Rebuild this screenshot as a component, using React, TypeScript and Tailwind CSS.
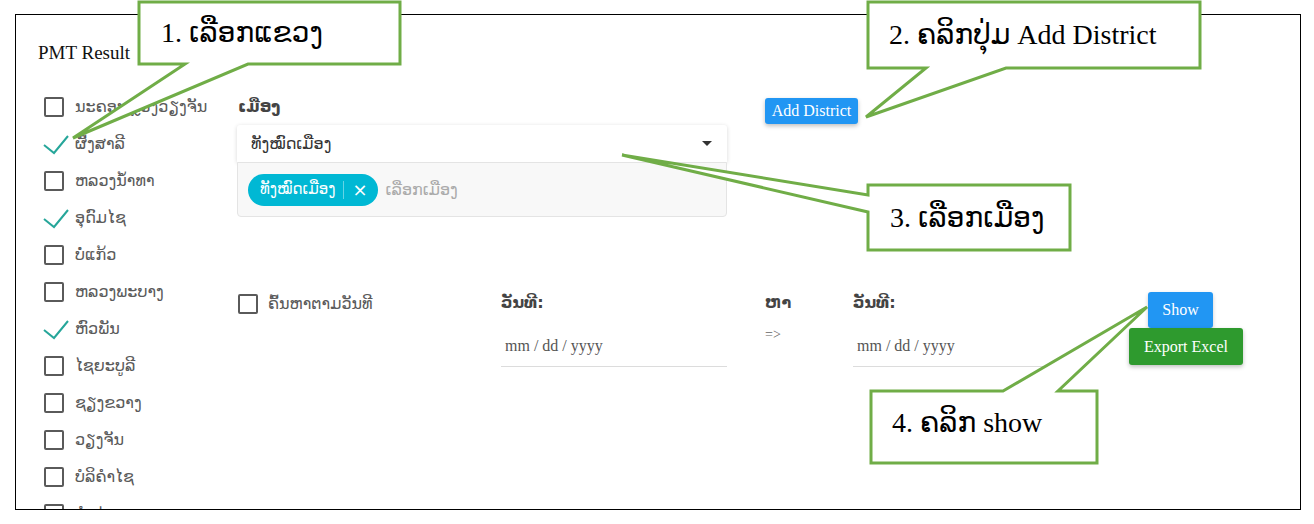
import React from "react";

const provinces = [
  { name: "ນະຄອນຫຼວງວຽງຈັນ", checked: false },
  { name: "ຜົ້ງສາລີ", checked: true },
  { name: "ຫລວງນ້ຳທາ", checked: false },
  { name: "ອຸດົມໄຊ", checked: true },
  { name: "ບໍ່ແກ້ວ", checked: false },
  { name: "ຫລວງພະບາງ", checked: false },
  { name: "ຫົວພັນ", checked: true },
  { name: "ໄຊຍະບູລີ", checked: false },
  { name: "ຊຽງຂວາງ", checked: false },
  { name: "ວຽງຈັນ", checked: false },
  { name: "ບໍລິຄຳໄຊ", checked: false },
  { name: "ຄຳມ່ວນ", checked: false },
];

const lao = { fontFamily: '"DejaVu Sans", "Noto Sans", sans-serif' };
const serif = { fontFamily: '"Liberation Serif", "DejaVu Sans", serif' };

function Box() {
  return <span className="block w-[20px] h-[20px] border-2 border-[#5a5a5a] rounded-[2px] shrink-0" />;
}

function Tick() {
  return (
    <svg width="26" height="22" viewBox="0 0 26 22" className="shrink-0 -ml-[1px] -mr-[5px]">
      <polyline points="1,11 11,19 25,2" fill="none" stroke="#26a69a" strokeWidth="2" />
    </svg>
  );
}

function DateField() {
  return (
    <div className="flex flex-col w-[226px]">
      <div className="h-[22px] text-[16px] font-bold text-[#444] leading-[22px]" style={lao}>
        ວັນທີ:
      </div>
      <div
        className="mt-[12px] h-[41px] border-b border-[#dcdcdc] flex items-center pl-[4px] text-[16px] text-[#555]"
        style={serif}
      >
        mm / dd / yyyy
      </div>
    </div>
  );
}

type Callout = { d: string; x: number; y: number; w: number; h: number; text: string; pl: number; dy: number };

const callouts: Callout[] = [
  { d: "M139,2 H400 V64 H248 L73,138 L185,64 H139 Z", x: 139, y: 2, w: 261, h: 62, text: "1. ເລືອກແຂວງ", pl: 22, dy: 0 },
  { d: "M868,2 H1200 V68 H1006 L866,117 L926,68 H868 Z", x: 868, y: 2, w: 332, h: 66, text: "2. ຄລິກປຸ່ມ Add District", pl: 21, dy: 0 },
  { d: "M868,185 H1070 V250 H868 V212 L622,155 L868,195 Z", x: 868, y: 185, w: 202, h: 65, text: "3. ເລືອກເມືອງ", pl: 22, dy: 0 },
  { d: "M871,391 H1003 L1147,307 L1058,391 H1097 V463 H871 Z", x: 871, y: 391, w: 226, h: 72, text: "4. ຄລິກ show", pl: 21, dy: -4 },
];

export default function App() {
  return (
    <div className="relative w-[1314px] h-[524px] bg-white overflow-hidden">
      <div className="ml-[15px] mt-[14px] w-[1286px] h-[496px] border border-black overflow-hidden pl-[22px] pt-[26px]">
        <h1 className="text-[19px] leading-[24px] text-[#111]" style={serif}>
          PMT Result
        </h1>

        <div className="flex mt-[32px]">
          {/* province list */}
          <ul className="w-[200px] pl-[6px] flex flex-col">
            {provinces.map(p => (
              <li key={p.name} className="h-[37px] flex items-start gap-[11px]">
                {p.checked ? <Tick /> : <Box />}
                <span className="text-[16px] leading-[20px] text-[#5a5a5a]" style={lao}>
                  {p.name}
                </span>
              </li>
            ))}
          </ul>

          <div className="flex flex-col">
            <div className="flex items-start">
              <div className="w-[490px] flex flex-col -ml-[1px]">
                <div className="h-[20px] text-[16px] font-bold text-[#444] leading-[20px] pl-[1px]" style={lao}>
                  ເມືອງ
                </div>
                <div className="mt-[8px] h-[37px] bg-white rounded-t-[3px] shadow-[0_1px_4px_rgba(0,0,0,0.16)] flex items-center justify-between pl-[14px] pr-[15px]">
                  <span className="text-[16px] text-[#333]" style={lao}>
                    ທັງໝົດເມືອງ
                  </span>
                  <svg width="10" height="6" viewBox="0 0 10 6">
                    <path d="M0,0 H10 L5,5 Z" fill="#333" />
                  </svg>
                </div>
                <div className="h-[55px] bg-[#f8f8f8] border border-[#e4e4e4] rounded-b-[4px] flex items-center pl-[10px] gap-[8px]">
                  <span className="h-[32px] rounded-full bg-[#00b8d4] flex items-center pl-[12px] pr-[10px] text-white text-[15px]" style={lao}>
                    ທັງໝົດເມືອງ
                    <span className="mx-[8px] w-px h-[18px] bg-white/40" />
                    <span className="text-[18px] leading-none">×</span>
                  </span>
                  <span className="text-[16px] text-[#aaa]" style={lao}>
                    ເລືອກເມືອງ
                  </span>
                </div>
              </div>

              <button
                className="ml-[38px] mt-[1px] h-[26px] w-[93px] bg-[#2196f3] text-white text-[16px] rounded-[3px] shadow-[0_2px_4px_rgba(0,0,0,0.25)]"
                style={serif}
              >
                Add District
              </button>
            </div>

            <div className="flex items-start mt-[75px]">
              <div className="w-[263px] flex items-start gap-[10px] pt-[2px]">
                <Box />
                <span className="text-[16px] leading-[20px] text-[#5a5a5a]" style={lao}>
                  ຄົ້ນຫາຕາມວັນທີ
                </span>
              </div>
              <DateField />
              <div className="ml-[38px] w-[88px] flex flex-col">
                <span className="h-[22px] text-[16px] font-bold text-[#444] leading-[22px]" style={lao}>
                  ຫາ
                </span>
                <span className="mt-[10px] text-[14px] text-[#666]" style={serif}>
                  =&gt;
                </span>
              </div>
              <DateField />
              <div className="ml-[50px] flex flex-col items-start">
                <button
                  className="ml-[19px] h-[36px] w-[65px] bg-[#2196f3] text-white text-[16px] rounded-[3px] shadow-[0_2px_4px_rgba(0,0,0,0.2)]"
                  style={serif}
                >
                  Show
                </button>
                <button
                  className="h-[37px] w-[114px] bg-[#2e9a2e] text-white text-[16px] rounded-[3px] shadow-[0_2px_4px_rgba(0,0,0,0.25)]"
                  style={serif}
                >
                  Export Excel
                </button>
              </div>
            </div>
          </div>
        </div>
      </div>

      {/* callouts lying over the screenshot */}
      <svg className="absolute inset-0 pointer-events-none" width="1314" height="524">
        {callouts.map(c => (
          <path key={c.text} d={c.d} fill="white" stroke="#70ad47" strokeWidth="3" strokeLinejoin="miter" />
        ))}
      </svg>
      {callouts.map(c => (
        <div
          key={c.text}
          className="absolute flex items-center text-[28px] text-black whitespace-nowrap"
          style={{ left: c.x, top: c.y + c.dy, width: c.w, height: c.h, paddingLeft: c.pl, ...serif }}
        >
          {c.text}
        </div>
      ))}
    </div>
  );
}
